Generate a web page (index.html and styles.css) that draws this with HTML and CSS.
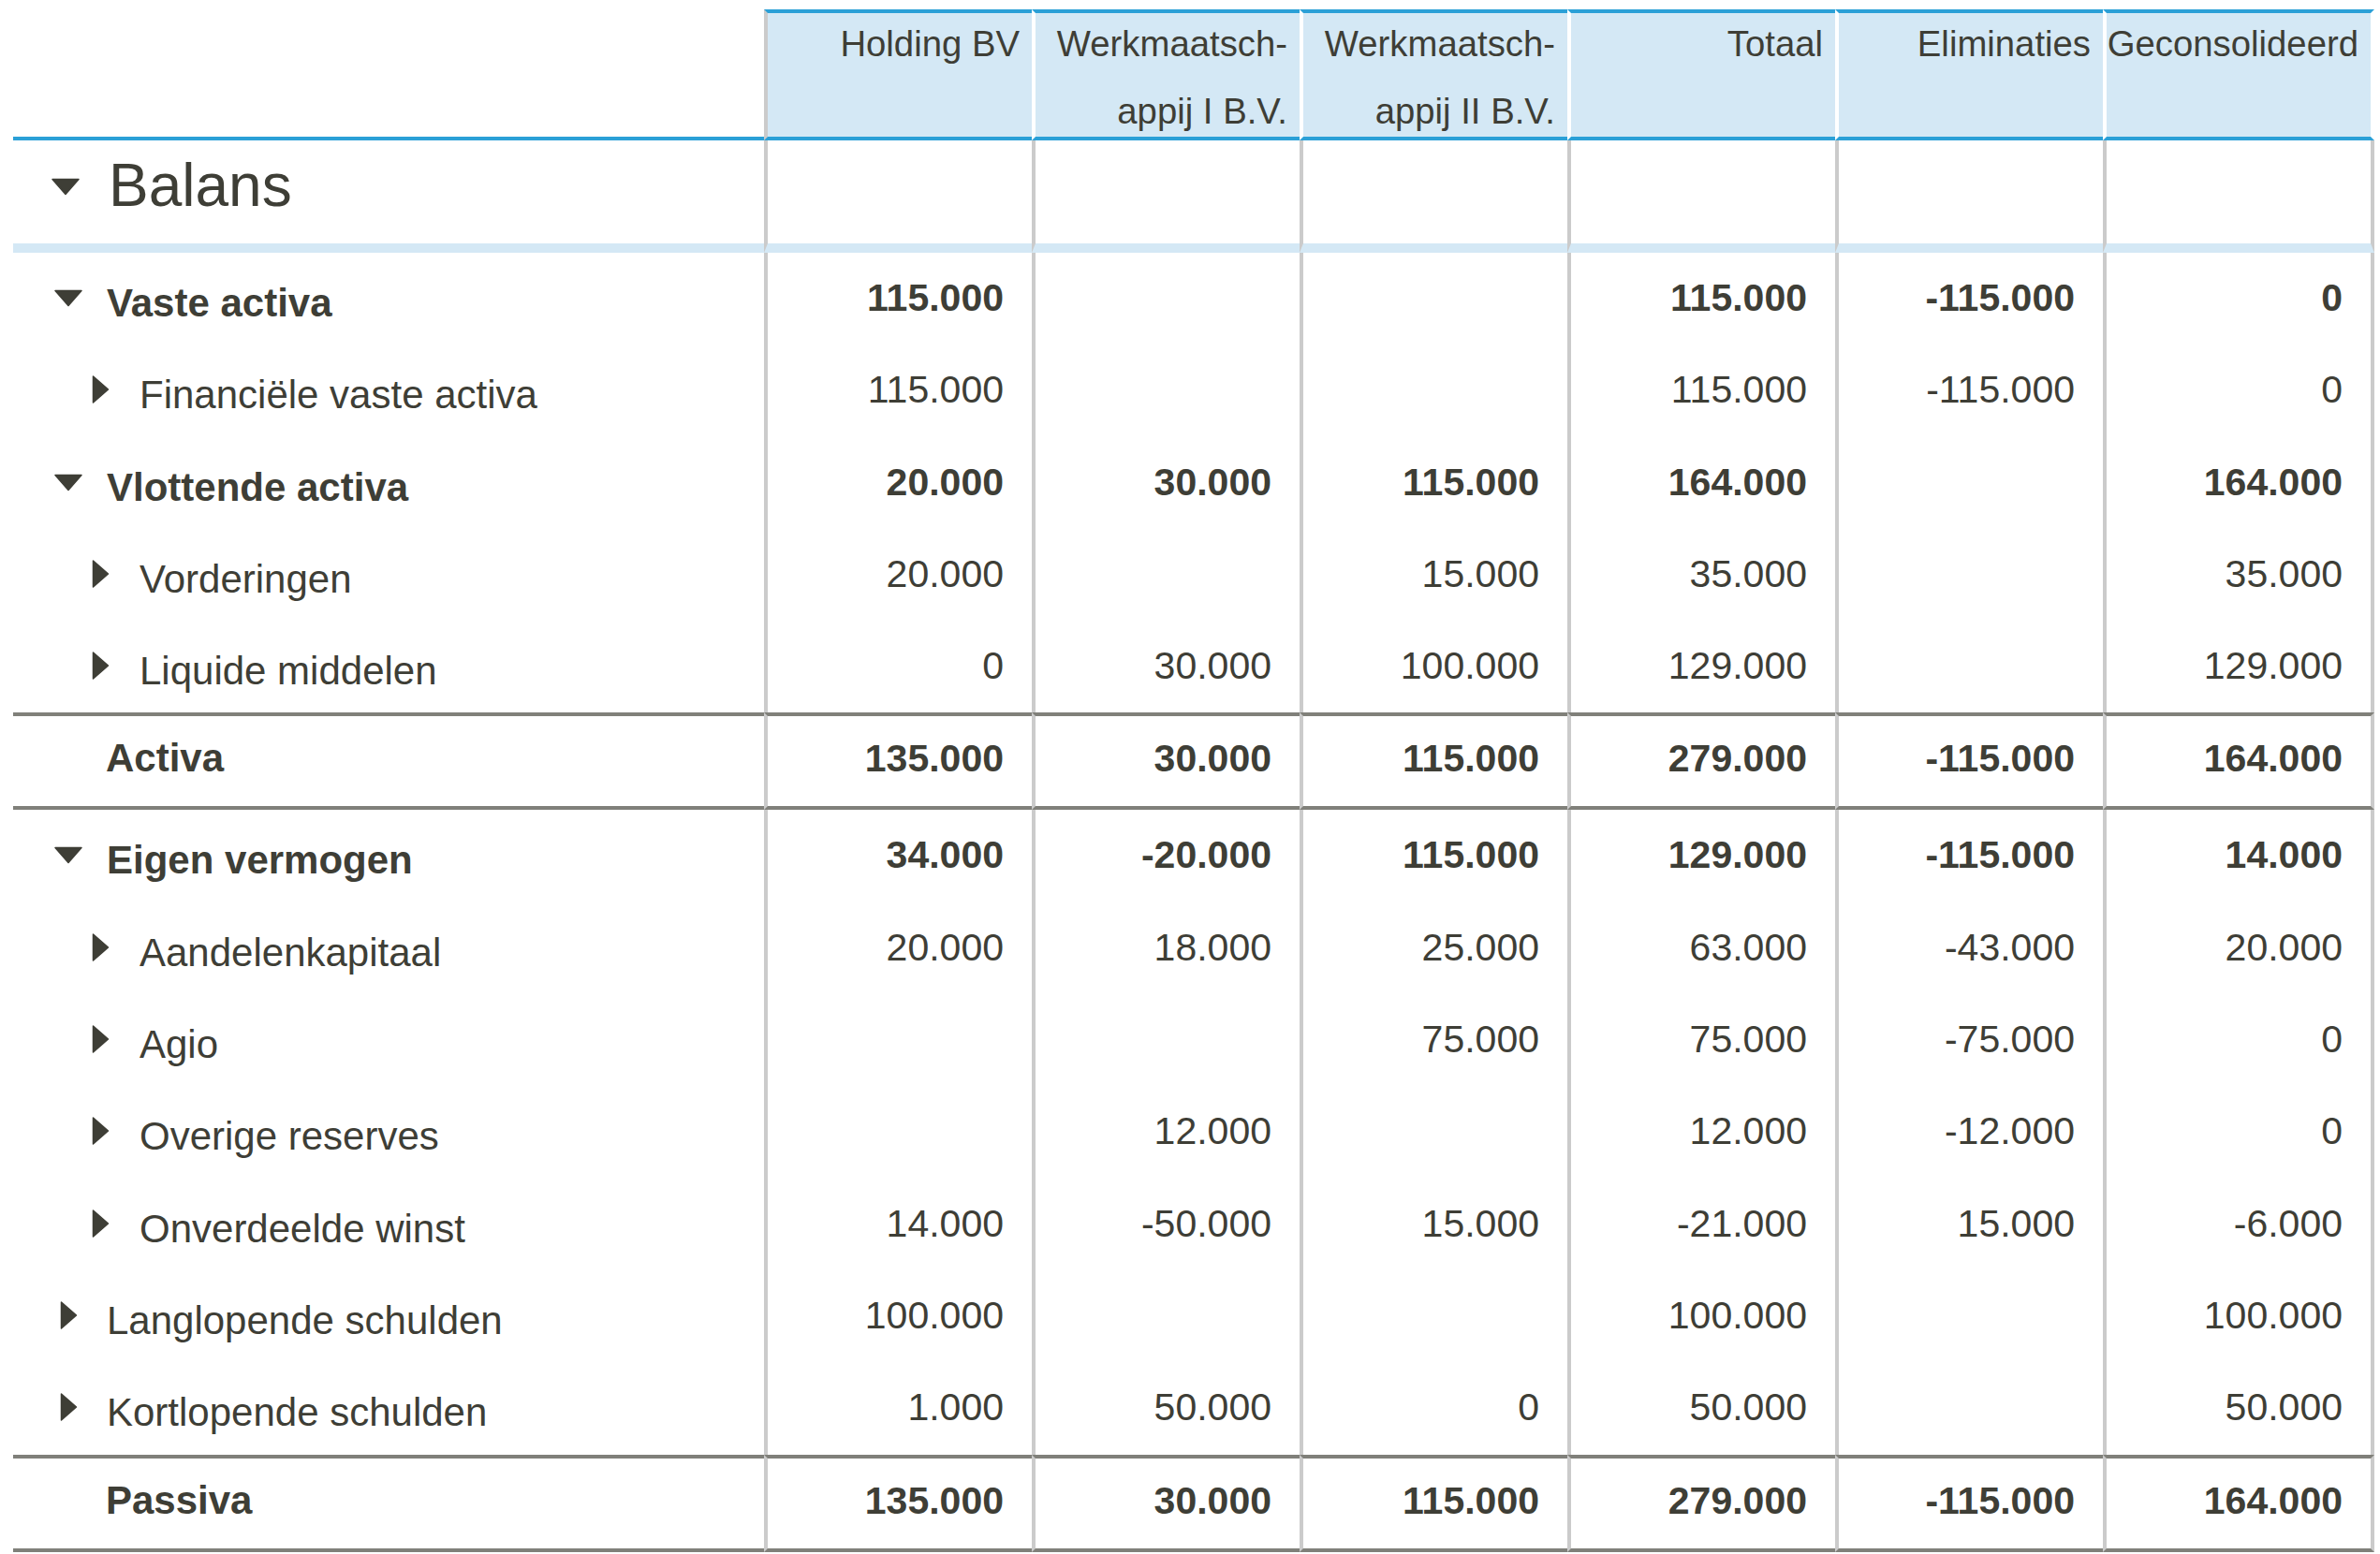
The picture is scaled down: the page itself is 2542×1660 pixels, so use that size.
FILE: index.html
```html
<!DOCTYPE html>
<html lang="nl">
<head>
<meta charset="utf-8">
<title>Balans</title>
<link rel="stylesheet" href="styles.css">
</head>
<body>
<table class="sheet">
  <colgroup>
    <col class="c-label">
    <col class="c-num"><col class="c-num"><col class="c-num"><col class="c-num"><col class="c-num">
    <col class="c-last">
  </colgroup>
  <thead>
    <tr>
      <th class="hl"></th>
      <th class="h first"><div class="ht">Holding BV</div></th>
      <th class="h"><div class="ht">Werkmaatsch-<br>appij I B.V.</div></th>
      <th class="h"><div class="ht">Werkmaatsch-<br>appij II B.V.</div></th>
      <th class="h"><div class="ht">Totaal</div></th>
      <th class="h"><div class="ht">Eliminaties</div></th>
      <th class="h last"><div class="ht">Geconsolideerd</div></th>
    </tr>
  </thead>
  <tbody>
    <tr class="r0">
      <td class="l"><div class="lbl l0"><span class="tw"><svg class="down" viewBox="0 0 32 19"><path d="M2 1.5 H30 L16 17.5 Z"/></svg></span><span>Balans</span></div></td>
      <td class="n"></td><td class="n"></td><td class="n"></td><td class="n"></td><td class="n"></td><td class="n last"></td>
    </tr>
    <tr class="d b">
      <td class="l"><div class="lbl l1"><span class="tw"><svg class="down" viewBox="0 0 32 19"><path d="M2 1.5 H30 L16 17.5 Z"/></svg></span><span>Vaste activa</span></div></td>
      <td class="n">115.000</td><td class="n"></td><td class="n"></td><td class="n">115.000</td><td class="n">-115.000</td><td class="n last">0</td>
    </tr>
    <tr class="d">
      <td class="l"><div class="lbl l2"><span class="tw"><svg class="right" viewBox="0 0 19 32"><path d="M1.5 2 L17.5 16 L1.5 30 Z"/></svg></span><span>Financiële vaste activa</span></div></td>
      <td class="n">115.000</td><td class="n"></td><td class="n"></td><td class="n">115.000</td><td class="n">-115.000</td><td class="n last">0</td>
    </tr>
    <tr class="d b">
      <td class="l"><div class="lbl l1"><span class="tw"><svg class="down" viewBox="0 0 32 19"><path d="M2 1.5 H30 L16 17.5 Z"/></svg></span><span>Vlottende activa</span></div></td>
      <td class="n">20.000</td><td class="n">30.000</td><td class="n">115.000</td><td class="n">164.000</td><td class="n"></td><td class="n last">164.000</td>
    </tr>
    <tr class="d">
      <td class="l"><div class="lbl l2"><span class="tw"><svg class="right" viewBox="0 0 19 32"><path d="M1.5 2 L17.5 16 L1.5 30 Z"/></svg></span><span>Vorderingen</span></div></td>
      <td class="n">20.000</td><td class="n"></td><td class="n">15.000</td><td class="n">35.000</td><td class="n"></td><td class="n last">35.000</td>
    </tr>
    <tr class="d">
      <td class="l"><div class="lbl l2"><span class="tw"><svg class="right" viewBox="0 0 19 32"><path d="M1.5 2 L17.5 16 L1.5 30 Z"/></svg></span><span>Liquide middelen</span></div></td>
      <td class="n">0</td><td class="n">30.000</td><td class="n">100.000</td><td class="n">129.000</td><td class="n"></td><td class="n last">129.000</td>
    </tr>
    <tr class="t b">
      <td class="l"><div class="lbl lt"><span>Activa</span></div></td>
      <td class="n">135.000</td><td class="n">30.000</td><td class="n">115.000</td><td class="n">279.000</td><td class="n">-115.000</td><td class="n last">164.000</td>
    </tr>
    <tr class="d b">
      <td class="l"><div class="lbl l1"><span class="tw"><svg class="down" viewBox="0 0 32 19"><path d="M2 1.5 H30 L16 17.5 Z"/></svg></span><span>Eigen vermogen</span></div></td>
      <td class="n">34.000</td><td class="n">-20.000</td><td class="n">115.000</td><td class="n">129.000</td><td class="n">-115.000</td><td class="n last">14.000</td>
    </tr>
    <tr class="d">
      <td class="l"><div class="lbl l2"><span class="tw"><svg class="right" viewBox="0 0 19 32"><path d="M1.5 2 L17.5 16 L1.5 30 Z"/></svg></span><span>Aandelenkapitaal</span></div></td>
      <td class="n">20.000</td><td class="n">18.000</td><td class="n">25.000</td><td class="n">63.000</td><td class="n">-43.000</td><td class="n last">20.000</td>
    </tr>
    <tr class="d">
      <td class="l"><div class="lbl l2"><span class="tw"><svg class="right" viewBox="0 0 19 32"><path d="M1.5 2 L17.5 16 L1.5 30 Z"/></svg></span><span>Agio</span></div></td>
      <td class="n"></td><td class="n"></td><td class="n">75.000</td><td class="n">75.000</td><td class="n">-75.000</td><td class="n last">0</td>
    </tr>
    <tr class="d">
      <td class="l"><div class="lbl l2"><span class="tw"><svg class="right" viewBox="0 0 19 32"><path d="M1.5 2 L17.5 16 L1.5 30 Z"/></svg></span><span>Overige reserves</span></div></td>
      <td class="n"></td><td class="n">12.000</td><td class="n"></td><td class="n">12.000</td><td class="n">-12.000</td><td class="n last">0</td>
    </tr>
    <tr class="d">
      <td class="l"><div class="lbl l2"><span class="tw"><svg class="right" viewBox="0 0 19 32"><path d="M1.5 2 L17.5 16 L1.5 30 Z"/></svg></span><span>Onverdeelde winst</span></div></td>
      <td class="n">14.000</td><td class="n">-50.000</td><td class="n">15.000</td><td class="n">-21.000</td><td class="n">15.000</td><td class="n last">-6.000</td>
    </tr>
    <tr class="d">
      <td class="l"><div class="lbl l1"><span class="tw"><svg class="right" viewBox="0 0 19 32"><path d="M1.5 2 L17.5 16 L1.5 30 Z"/></svg></span><span>Langlopende schulden</span></div></td>
      <td class="n">100.000</td><td class="n"></td><td class="n"></td><td class="n">100.000</td><td class="n"></td><td class="n last">100.000</td>
    </tr>
    <tr class="d">
      <td class="l"><div class="lbl l1"><span class="tw"><svg class="right" viewBox="0 0 19 32"><path d="M1.5 2 L17.5 16 L1.5 30 Z"/></svg></span><span>Kortlopende schulden</span></div></td>
      <td class="n">1.000</td><td class="n">50.000</td><td class="n">0</td><td class="n">50.000</td><td class="n"></td><td class="n last">50.000</td>
    </tr>
    <tr class="t b">
      <td class="l"><div class="lbl lt"><span>Passiva</span></div></td>
      <td class="n">135.000</td><td class="n">30.000</td><td class="n">115.000</td><td class="n">279.000</td><td class="n">-115.000</td><td class="n last">164.000</td>
    </tr>
  </tbody>
</table>
</body>
</html>
```
FILE: styles.css
```css
* { box-sizing: border-box; }

body {
  margin: 0;
  background: #ffffff;
  font-family: "Liberation Sans", Arial, Helvetica, sans-serif;
  color: #3e3e36;
}

.sheet {
  border-collapse: separate;
  border-spacing: 0;
  table-layout: fixed;
  width: 2522px;
  margin: 10px 0 0 14px;
}

.c-label { width: 802px; }
.c-num { width: 286px; }
.c-last { width: 290px; }

/* header */
.sheet th {
  height: 140px;
  padding: 0;
  vertical-align: top;
  font-weight: normal;
}

.hl {
  background: #ffffff;
  border-bottom: 4px solid #2ba0d7;
}

.h {
  background: #d4e8f5;
  border-top: 4px solid #2ba0d7;
  border-bottom: 4px solid #2ba0d7;
  border-left: 4px solid #ffffff;
  text-align: right;
  font-size: 38.3px;
  padding-right: 13px !important;
  white-space: nowrap;
}

.h.first { border-left-color: #cbcbcb; }
.h.last { border-right: 4px solid #ffffff; }

.ht {
  margin-top: -3px;
  height: 129px;
  line-height: 72px;
}

/* body cells */
.sheet td {
  padding: 0;
  vertical-align: top;
  font-size: 41px;
  line-height: 48px;
  white-space: nowrap;
}

.sheet td.n {
  border-left: 4px solid #cbcbcb;
  text-align: right;
  padding: 24px 30px 0 0;
}

.sheet td.n.last { border-right: 4px solid #cbcbcb; }

.sheet td.l {
  padding-top: 30px;
  font-size: 42px;
}

tr.d td { height: 98.3px; }

tr.b td { font-weight: bold; }

tr.r0 td {
  height: 120px;
  border-bottom: 10px solid #d4e8f5;
}

tr.r0 td.l {
  font-size: 64px;
  line-height: 74px;
  padding-top: 11px;
}

tr.t td {
  height: 104px;
  border-top: 4px solid #80807a;
  border-bottom: 4px solid #80807a;
}

tr.t td.n,
tr.t td.l { padding-top: 21px; }

/* label with twisty */
.lbl {
  display: flex;
  align-items: flex-start;
}

.tw {
  flex: none;
  width: 32px;
  margin-right: 25px;
  display: flex;
  justify-content: center;
}

.tw svg { display: block; fill: #3e3e36; stroke: #3e3e36; stroke-width: 1.5; stroke-linejoin: round; }
.tw svg.down { width: 32px; height: 19px; margin-top: 9px; }
.tw svg.right { width: 19px; height: 32px; margin-top: 2px; }

.l0 { padding-left: 40px; }
.l0 .tw { margin-right: 30px; }
.l0 .tw svg.down { margin-top: 29px; }

.l1 { padding-left: 43px; }

.l2 { padding-left: 77px; }
.l2 .tw { margin-right: 26px; }

.lt { padding-left: 99px; }
```
